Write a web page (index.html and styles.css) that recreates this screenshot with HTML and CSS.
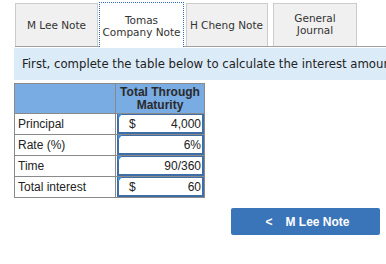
FILE: index.html
```html
<!DOCTYPE html>
<html>
<head><link rel="stylesheet" href="styles.css"></head>
<body>
<div class="tabs">
  <div class="tab t1">M Lee Note</div>
  <div class="tab t2 active">Tomas<br>Company Note</div>
  <div class="tab t3">H Cheng Note</div>
  <div class="tab t4">General<br>Journal</div>
</div>
<div class="info">First, complete the table below to calculate the interest amount for the Tomas Company note.</div>
<table class="calc">
  <tr class="head"><th class="blank"></th><th class="col">Total Through<br>Maturity</th></tr>
  <tr><td class="lbl">Principal</td><td class="cell"><div class="inp"><span class="cur">$</span><span class="val">4,000</span></div></td></tr>
  <tr><td class="lbl">Rate (%)</td><td class="cell"><div class="inp"><span class="val">6%</span></div></td></tr>
  <tr><td class="lbl">Time</td><td class="cell"><div class="inp"><span class="val">90/360</span></div></td></tr>
  <tr><td class="lbl">Total interest</td><td class="cell"><div class="inp"><span class="cur">$</span><span class="val">60</span></div></td></tr>
</table>
<div class="actions">
  <button class="nav"><span class="chev">&lt;</span>M Lee Note</button>
</div>
</body>
</html>
```
FILE: styles.css
```css
html, body { margin: 0; padding: 0; background: #fff; }
body { width: 386px; height: 264px; overflow: hidden; font-family: "DejaVu Sans", Verdana, sans-serif; }
.tabs {
  display: flex;
  align-items: flex-end;
  margin: 3px 0 0 15px;
  border-bottom: 1px solid #a0a0a0;
  height: 43px;
}
.tab {
  box-sizing: border-box;
  height: 43px;
  background: #f0f0f0;
  border: 1px solid #cccccc;
  border-bottom: none;
  font-size: 10.5px;
  line-height: 12px;
  color: #333;
  display: flex;
  align-items: center;
  justify-content: center;
  text-align: center;
  margin-right: 2px;
}
.t1 { width: 83px; margin-right: 1px; }
.t2 { width: 85px; }
.t3 { width: 82px; margin-right: 5px; padding-right: 1px; }
.t4 { width: 84px; padding-bottom: 2px; }
.tab.active {
  background: #fff;
  border: 1px dotted #2f6fbf;
  border-bottom: none;
  margin-bottom: -1px;
  height: 45px;
  padding-top: 2px;
}
.info {
  margin: 1px 0 0 14px;
  height: 32px;
  background: #dcebf8;
  font-size: 11.7px;
  line-height: 32px;
  padding-left: 8px;
  color: #222;
  white-space: nowrap;
  overflow: hidden;
}
.calc {
  margin: 3px 0 0 14px;
  border-collapse: collapse;
  font-family: "Liberation Sans", Arial, sans-serif;
  font-size: 12px;
  color: #222;
}
.calc td, .calc th { border: 1px solid #8a8a8a; padding: 0; }
.head th { background: #78ace3; height: 29px; }
.head .blank { width: 100px; }
.head .col { width: 88px; font-weight: bold; line-height: 12.5px; color: #2a2a2a; padding-top: 0; }
.lbl { height: 20px; padding-left: 3px !important; }
.cell { padding: 0 !important; }
.inp {
  box-sizing: border-box;
  height: 20px;
  margin: 0 0 0 1px;
  border: 2px solid #3e6ea5;
  border-top-width: 1px;
  display: flex;
  align-items: center;
  padding: 0 1px 0 10px;
  position: relative;
}
.inp::before {
  content: "";
  position: absolute;
  left: -1px; top: -1px;
  border-top: 5px solid #3e8ee0;
  border-right: 4px solid transparent;
}
.cur { flex: none; }
.val { margin-left: auto; }
.actions { display: flex; justify-content: flex-end; padding: 10px 6px 0 0; }
.nav {
  width: 149px; height: 27px;
  background: #3a75b9;
  border: none; border-radius: 2px;
  color: #fff;
  font-family: "Liberation Sans", Arial, sans-serif;
  font-weight: bold;
  font-size: 12px;
  display: flex; align-items: center; justify-content: center;
  padding: 0 0 0 4px;
}
.chev { margin-right: 13px; }
```
